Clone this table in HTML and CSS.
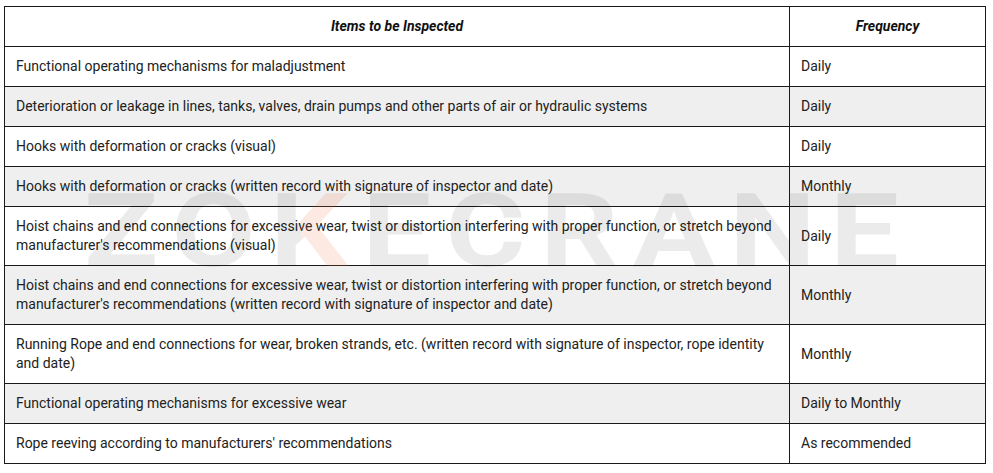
FILE: index.html
```html
<!DOCTYPE html>
<html>
<head>
<meta charset="utf-8">
<link rel="stylesheet" href="styles.css">
</head>
<body>
<div class="wrap">
  <table class="insp">
    <colgroup><col class="c1"><col class="c2"></colgroup>
    <thead>
      <tr><th>Items to be Inspected</th><th>Frequency</th></tr>
    </thead>
    <tbody>
      <tr><td>Functional operating mechanisms for maladjustment</td><td>Daily</td></tr>
      <tr class="alt"><td>Deterioration or leakage in lines, tanks, valves, drain pumps and other parts of air or hydraulic systems</td><td>Daily</td></tr>
      <tr><td>Hooks with deformation or cracks (visual)</td><td>Daily</td></tr>
      <tr class="alt"><td>Hooks with deformation or cracks (written record with signature of inspector and date)</td><td>Monthly</td></tr>
      <tr><td>Hoist chains and end connections for excessive wear, twist or distortion interfering with proper function, or stretch beyond manufacturer's recommendations (visual)</td><td>Daily</td></tr>
      <tr class="alt"><td>Hoist chains and end connections for excessive wear, twist or distortion interfering with proper function, or stretch beyond manufacturer's recommendations (written record with signature of inspector and date)</td><td>Monthly</td></tr>
      <tr><td>Running Rope and end connections for wear, broken strands, etc. (written record with signature of inspector, rope identity and date)</td><td>Monthly</td></tr>
      <tr class="alt"><td>Functional operating mechanisms for excessive wear</td><td>Daily to Monthly</td></tr>
      <tr><td>Rope reeving according to manufacturers' recommendations</td><td>As recommended</td></tr>
    </tbody>
  </table>
  <div class="mark" aria-hidden="true">ZO<span class="k">K</span>ECRANE</div>
</div>
</body>
</html>
```
FILE: styles.css
```css
html, body {
  margin: 0;
  padding: 0;
  background: #fff;
}
body {
  font-family: Roboto, "Liberation Sans", Arial, sans-serif;
  color: #222;
}
.wrap {
  position: relative;
  padding: 6px 0 0 4px;
}
.insp {
  border-collapse: collapse;
  width: 982px;
  font-size: 14px;
  line-height: 19px;
}
.c1 { width: 785px; }
.insp th, .insp td {
  border: 1px solid #1a1a1a;
  padding: 10px 11px;
  text-align: left;
  vertical-align: middle;
}
.insp th {
  font-weight: 700;
  font-style: italic;
  text-align: center;
  color: #111;
}
.insp tr.alt td {
  background: #efefef;
}
.mark {
  position: absolute;
  left: 84px;
  top: 180px;
  font-family: Roboto, "Liberation Sans", Arial, sans-serif;
  font-size: 102px;
  font-weight: 700;
  letter-spacing: 12px;
  line-height: 1;
  color: rgba(0, 0, 0, 0.08);
  pointer-events: none;
  white-space: nowrap;
  transform: scaleX(1.2);
  transform-origin: left top;
}
.mark .k {
  background: linear-gradient(90deg, rgba(0,0,0,0.08) 0 34%, rgba(240,110,60,0.15) 34% 100%);
  -webkit-background-clip: text;
  background-clip: text;
  color: transparent;
}
```
